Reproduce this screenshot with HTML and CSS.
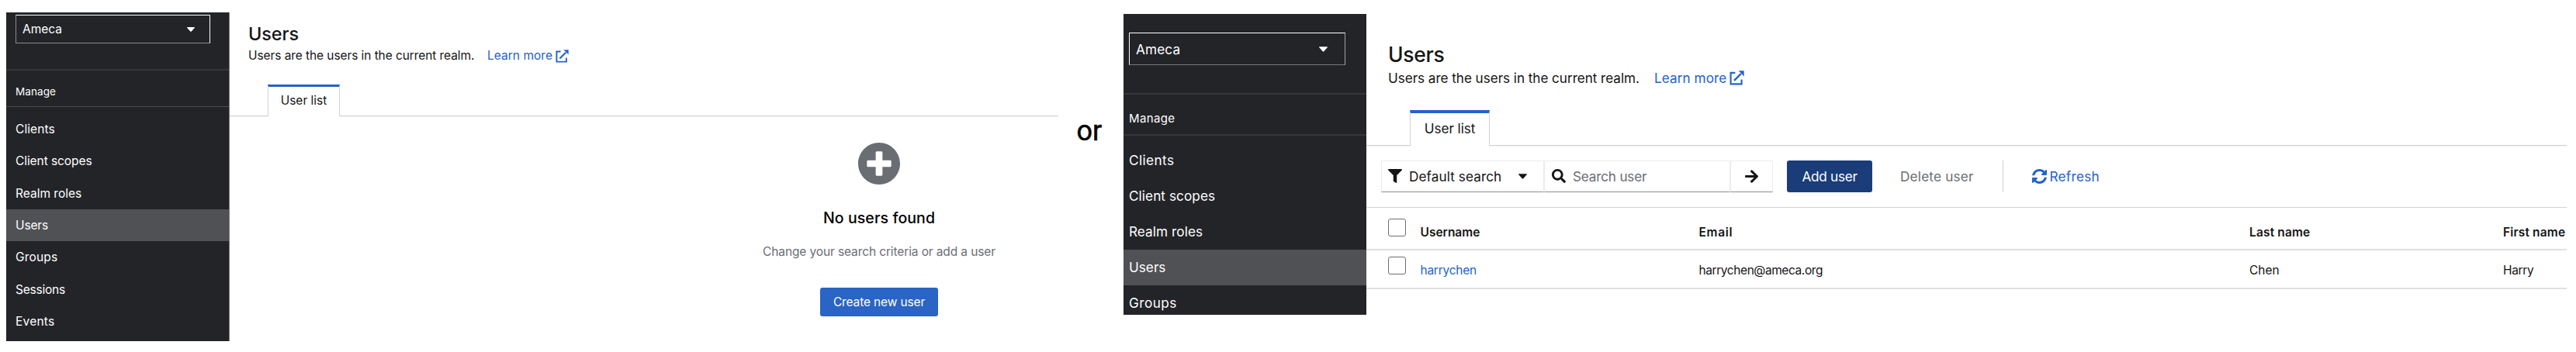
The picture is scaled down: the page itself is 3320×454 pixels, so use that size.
FILE: index.html
```
<!DOCTYPE html>
<html lang="en">
<head>
<meta charset="utf-8">
<title>Users</title>
<link rel="stylesheet" href="styles.css">
</head>
<body>
<div class="page">
  <section class="console console-empty">
    <nav class="sidebar">
      <div class="realm"><span class="realm-name">Ameca</span><svg class="caret" viewBox="0 0 10 6"><path d="M.6 0h8.800q.9.300.3 1L5.700 5.600q-.7.700-1.400 0L.3 1Q-.3.300.6 0z"/></svg></div>
      <div class="nav-title"><span class="manage">Manage</span></div>
      <ul class="nav">
        <li class="w-clients">Clients</li>
        <li class="w-scopes">Client scopes</li>
        <li class="w-roles">Realm roles</li>
        <li class="w-users current">Users</li>
        <li class="w-groups">Groups</li>
        <li class="w-sessions">Sessions</li>
        <li class="w-events">Events</li>
      </ul>
    </nav>
    <main class="main">
      <h1 class="title">Users</h1>
      <p class="desc"><span class="desc-text">Users are the users in the current realm.</span><a class="learn">Learn more<svg class="ext" viewBox="0 0 18 18"><path d="M7 2.700H1.500v13.800h13.300V11" fill="none" stroke="currentColor" stroke-width="2"/><path d="M5.700 12.200L14 3.900" fill="none" stroke="currentColor" stroke-width="2.300"/><path d="M11 .3h6.700V7z" fill="currentColor"/></svg></a></p>
      <div class="tabs"><div class="tab">User list</div></div>
      <div class="empty">
        <svg class="plus" viewBox="8 8 496 496"><path d="M256 8C119 8 8 119 8 256s111 248 248 248 248-111 248-248S393 8 256 8zm144 276c0 6.600-5.400 12-12 12h-92v92c0 6.600-5.400 12-12 12h-56c-6.600 0-12-5.400-12-12v-92h-92c-6.600 0-12-5.400-12-12v-56c0-6.600 5.400-12 12-12h92v-92c0-6.600 5.400-12 12-12h56c6.600 0 12 5.400 12 12v92h92c6.600 0 12 5.400 12 12v56z"/></svg>
        <h2 class="empty-title">No users found</h2>
        <p class="empty-text">Change your search criteria or add a user</p>
        <button class="create">Create new user</button>
      </div>
    </main>
  </section>

  <div class="or">or</div>

  <section class="console console-list">
    <nav class="sidebar">
      <div class="realm"><span class="realm-name">Ameca</span><svg class="caret" viewBox="0 0 10 6"><path d="M.6 0h8.800q.9.300.3 1L5.700 5.600q-.7.700-1.400 0L.3 1Q-.3.300.6 0z"/></svg></div>
      <div class="nav-title"><span class="manage">Manage</span></div>
      <ul class="nav">
        <li class="w-clients">Clients</li>
        <li class="w-scopes">Client scopes</li>
        <li class="w-roles">Realm roles</li>
        <li class="w-users current">Users</li>
        <li class="w-groups">Groups</li>
      </ul>
    </nav>
    <main class="main">
      <h1 class="title">Users</h1>
      <p class="desc"><span class="desc-text">Users are the users in the current realm.</span><a class="learn">Learn more<svg class="ext" viewBox="0 0 18 18"><path d="M7 2.700H1.500v13.800h13.300V11" fill="none" stroke="currentColor" stroke-width="2"/><path d="M5.700 12.200L14 3.900" fill="none" stroke="currentColor" stroke-width="2.300"/><path d="M11 .3h6.700V7z" fill="currentColor"/></svg></a></p>
      <div class="tabs"><div class="tab">User list</div></div>
      <div class="toolbar">
        <div class="field filter">
          <svg class="icon" viewBox="0 0 512 512"><path d="M487.976 0H24.028C2.710 0-8.047 25.866 7.058 40.971L192 225.941V432c0 7.831 3.821 15.170 10.237 19.662l80 55.980C298.020 518.690 320 507.493 320 487.980V225.941l184.947-184.970C520.021 25.896 509.338 0 487.976 0z"/></svg>
          <span class="filter-text">Default search</span>
          <svg class="caret" viewBox="0 0 10 6"><path d="M.6 0h8.800q.9.300.3 1L5.700 5.600q-.7.700-1.400 0L.3 1Q-.3.300.6 0z"/></svg>
        </div>
        <div class="field search">
          <svg class="icon" viewBox="0 0 512 512"><path d="M505 442.700L405.300 343c-4.500-4.500-10.600-7-17-7H372c27.600-35.300 44-79.700 44-128C416 93.100 322.900 0 208 0S0 93.100 0 208s93.100 208 208 208c48.300 0 92.700-16.400 128-44v16.300c0 6.400 2.500 12.500 7 17l99.700 99.700c9.400 9.400 24.600 9.400 33.900 0l28.300-28.300c9.400-9.400 9.400-24.600.1-34zM208 336c-70.700 0-128-57.200-128-128 0-70.700 57.200-128 128-128 70.700 0 128 57.200 128 128 0 70.700-57.200 128-128 128z"/></svg>
          <span class="search-text">Search user</span>
        </div>
        <div class="field go">
          <svg class="arrow" viewBox="0 32 448 448"><path d="M190.500 66.900l22.200-22.200c9.400-9.400 24.600-9.400 33.900 0L441 239c9.400 9.400 9.400 24.600 0 33.900L246.600 467.300c-9.400 9.400-24.600 9.400-33.900 0l-22.200-22.200c-9.500-9.500-9.300-25 .4-34.300L311.400 296H24c-13.300 0-24-10.700-24-24v-32c0-13.300 10.700-24 24-24h287.400L190.900 101.200c-9.800-9.300-10-24.800-.4-34.300z"/></svg>
        </div>
        <button class="add">Add user</button>
        <span class="delete">Delete user</span>
        <a class="refresh"><svg class="sync" viewBox="8 8 496 496"><path d="M370.720 133.280C339.458 104.008 298.888 87.962 255.848 88c-77.458.068-144.328 53.178-162.791 126.850-1.344 5.363-6.122 9.150-11.651 9.150H24.103c-7.498 0-13.194-6.807-11.807-14.176C33.933 94.924 134.813 8 256 8c66.448 0 126.791 26.136 171.315 68.685L463.030 40.970C478.149 25.851 504 36.559 504 57.941V192c0 13.255-10.745 24-24 24H345.941c-21.382 0-32.090-25.851-16.971-40.971l41.750-41.749zM32 296h134.059c21.382 0 32.090 25.851 16.971 40.971l-41.750 41.750c31.262 29.273 71.835 45.319 114.876 45.280 77.418-.07 144.315-53.144 162.787-126.849 1.344-5.363 6.122-9.150 11.651-9.150h57.304c7.498 0 13.194 6.807 11.807 14.176C478.067 417.076 377.187 504 256 504c-66.448 0-126.791-26.136-171.315-68.685L48.970 471.030C33.851 486.149 8 475.441 8 454.059V320c0-13.255 10.745-24 24-24z"/></svg>Refresh</a>
      </div>
      <div class="table">
        <div class="row head">
          <span class="check"></span><span>Username</span><span class="email-head">Email</span><span class="name-head">Last name</span><span class="name-head">First name</span>
        </div>
        <div class="row body">
          <span class="check"></span><a class="user-link">harrychen</a><span class="email">harrychen@ameca.org</span><span>Chen</span><span class="first">Harry</span>
        </div>
      </div>
    </main>
  </section>
</div>
</body>
</html>
```
FILE: styles.css
```
* { box-sizing: border-box; }
body {
  margin: 0;
  background: #fff;
  color: #151515;
  font-family: Inter, "Liberation Sans", sans-serif;
}
h1, h2, p, ul { margin: 0; padding: 0; }
button { border: 0; padding: 0; color: #fff; font: inherit; border-radius: 3px; }
svg { display: block; flex: none; fill: currentColor; }

.page {
  display: flex;
  align-items: flex-start;
  width: 3320px;
  height: 454px;
  overflow: hidden;
  padding-left: 8px;
}
.console { display: flex; align-items: flex-start; flex: none; white-space: nowrap; }
.console-empty { width: 1356px; font-size: 15.5px; }
.console-list { width: 1860px; font-size: 17.2px; }
.main { flex: 1; min-width: 0; }

/* Sidebar */
.sidebar { flex: none; background: #232428; color: #fff; overflow: hidden; }
.realm { display: flex; align-items: center; justify-content: space-between; }
.nav-title { display: flex; align-items: center; }
.nav { list-style: none; }
.nav li { display: flex; align-items: center; }
.nav .current { background: #505154; }

.console-empty .sidebar { width: 288px; height: 424px; margin-top: 16px; border-right: 1px solid #77787a; }
.console-empty .realm {
  width: 251px;
  height: 37px;
  margin: 3px 0 33px 12px;
  padding: 0 19px 0 8px;
  border: 1px solid #fff;
  border-left-color: #8a8b8d;
  border-bottom-color: #8a8b8d;
}
.console-empty .caret { width: 10px; height: 6px; }
.console-empty .nav-title {
  height: 49px;
  padding: 8px 0 0 12px;
  border-top: 2px solid #36373b;
  border-bottom: 1px solid #4a4b4f;
  font-size: 13.5px;
}
.console-empty .nav { padding-top: 7.6px; }
.console-empty .nav li { height: 41.4px; padding-left: 12px; }
.console-empty .manage { letter-spacing: .08px; }
.console-empty .w-clients { letter-spacing: .09px; }
.console-empty .w-scopes { letter-spacing: -.07px; }
.console-empty .w-users { letter-spacing: -.15px; }
.console-empty .w-groups { letter-spacing: .18px; }
.console-empty .w-sessions { letter-spacing: -.22px; }
.console-empty .w-events { letter-spacing: .23px; }

.console-list .sidebar { width: 313px; height: 388px; margin-top: 18px; }
.console-list .realm {
  width: 279px;
  height: 42px;
  margin: 24px 0 36px 7px;
  padding: 0 22px 0 8px;
  border: 1px solid #fff;
  border-right-color: #a0a1a2;
  border-bottom-color: #77787a;
}
.console-list .caret { width: 11px; height: 7px; }
.console-list .nav-title {
  height: 55px;
  padding: 10px 0 0 7px;
  border-top: 2px solid #36373b;
  border-bottom: 2px solid #36373b;
  font-size: 15px;
}
.console-list .nav { padding-top: 9px; }
.console-list .nav li { height: 46px; padding: 0 0 1px 7px; }
.console-list .realm-name { letter-spacing: .14px; }
.console-list .manage { letter-spacing: .37px; }
.console-list .w-clients { letter-spacing: .41px; }
.console-list .w-scopes, .console-list .w-roles { letter-spacing: .06px; }
.console-list .w-groups { letter-spacing: .46px; }

/* Page heading */
.title { font-weight: 500; }
.desc { display: flex; }
.learn { display: flex; align-items: center; color: #2662c9; }

.console-empty .title { padding: 29.5px 0 0 24px; font-size: 23.5px; line-height: 28px; letter-spacing: -.11px; }
.console-empty .desc { padding: 2.5px 0 .5px 24px; line-height: 24px; }
.console-empty .desc-text { width: 308px; letter-spacing: -.08px; }
.console-empty .learn { gap: 4px; letter-spacing: .03px; }
.console-empty .ext { width: 17px; height: 17px; }
.console-list .title { padding: 53.6px 0 0 28px; font-size: 26.5px; line-height: 32px; letter-spacing: -.3px; }
.console-list .desc { padding: 2.4px 0 0 28px; line-height: 26px; }
.console-list .desc-text { width: 343px; letter-spacing: -.07px; }
.console-list .learn { gap: 4px; letter-spacing: .05px; }
.console-list .ext { width: 19px; height: 19px; }

/* Tabs */
.tabs { display: flex; }
.tabs::before, .tabs::after { content: ""; border-bottom: 1px solid #d2d2d2; box-shadow: 0 1px #f1f1f1; }
.tabs::after { flex: 1; }
.tab {
  display: flex;
  align-items: center;
  justify-content: center;
  border: 1px solid #d2d2d2;
  border-bottom: 0;
}
.console-empty .tabs { height: 41px; margin-top: 24.5px; }
.console-empty .tabs::before { width: 49px; }
.console-empty .tab { width: 93px; border-top: 3px solid #2662c9; padding-bottom: 3px; }
.console-list .tabs { height: 46px; margin-top: 28px; }
.console-list .tabs::before { width: 56px; }
.console-list .tab { width: 103px; border-top: 4px solid #2662c9; padding-bottom: 3px; letter-spacing: -.07px; }

/* Empty state */
.empty { display: flex; flex-direction: column; align-items: center; padding: 34px 0 0 606px; }
.plus { width: 54px; height: 54px; color: #6a6e73; }
.empty-title { margin-top: 30px; font-size: 19.5px; font-weight: 500; line-height: 26px; letter-spacing: .09px; color: #000; }
.empty-text { margin-top: 19px; line-height: 24px; letter-spacing: -.12px; color: #6a6e73; }
.create { width: 152px; height: 37px; margin-top: 34px; background: #2a64c5; letter-spacing: -.14px; }

.or {
  width: 84px;
  flex: none;
  padding: 148px 0 0 23.5px;
  font: 36px/42px Roboto, sans-serif;
  -webkit-text-stroke: .5px #000;
  color: #000;
}

/* Toolbar */
.toolbar { display: flex; height: 41px; margin: 19px 0 19px 19px; }
.field { display: flex; align-items: center; border: 1px solid #ececec; border-bottom-color: #8a8d90; }
.icon { width: 18px; height: 18px; }
.filter { width: 210px; padding: 0 21px 0 8px; }
.filter-text { margin: 0 auto 0 9px; letter-spacing: .07px; }
.search { width: 240px; padding-left: 9px; }
.search-text { margin-left: 9px; color: #6a6e73; letter-spacing: -.21px; }
.go { width: 55px; justify-content: center; }
.arrow { width: 17px; height: 17px; }
.add { width: 110px; margin-left: 18px; background: #1a3d7a; letter-spacing: -.29px; }
.delete { width: 168px; padding-left: 36px; line-height: 41px; color: #6a6e73; letter-spacing: .18px; }
.refresh { display: flex; align-items: center; gap: 3.5px; padding-left: 37px; border-left: 1px solid #d2d2d2; color: #2662c9; letter-spacing: .26px; }
.sync { width: 19px; height: 19px; }

/* Table */
.table { border-top: 1px solid #d2d2d2; font-size: 15.5px; }
.row {
  display: grid;
  grid-template-columns: 41.5px 359px 709.5px 327px 1fr;
  align-items: center;
  padding-left: 28px;
  border-bottom: 2px solid #e0e0e0;
}
.head { height: 55px; padding-top: 11px; font-weight: 600; }
.body { height: 50px; padding-top: 4px; }
.check { align-self: start; width: 23px; height: 23px; border: 1px solid #6a6e73; border-radius: 3px; }
.head .check { margin-top: 3px; }
.body .check { margin-top: 4px; }
.email-head { letter-spacing: .68px; }
.name-head { letter-spacing: .15px; }
.user-link { color: #2662c9; letter-spacing: -.25px; }
.email { letter-spacing: -.42px; }
.first { letter-spacing: -.34px; }
```
